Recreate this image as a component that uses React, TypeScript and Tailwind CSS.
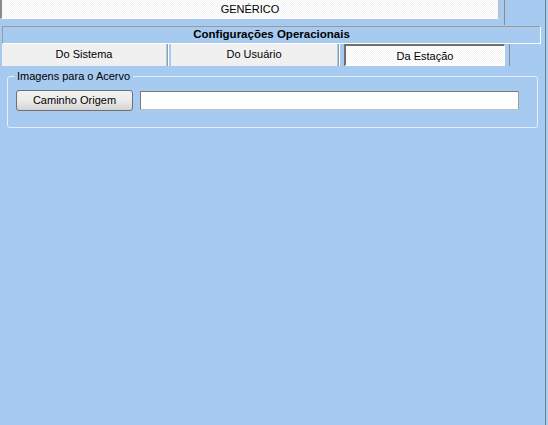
import React from 'react';

const checker =
  'bg-[repeating-conic-gradient(#f4f4f4_0%_25%,#ffffff_0%_50%)] bg-[length:2px_2px]';

const Tab: React.FC<{ label: string; active?: boolean; className?: string }> = ({ label, active, className }) =>
  active ? (
    <div
      className={`h-[22px] flex items-center justify-center border-t-2 border-l-2 border-t-[#6e6e6e] border-l-[#6e6e6e] border-r border-b border-r-white border-b-white ${checker} ${className ?? ''}`}
    >
      <span className="pt-[2px]">{label}</span>
    </div>
  ) : (
    <div className={`h-[22px] flex items-center justify-center bg-[#f0f0f0] ${className ?? ''}`}>
      <span className="-mt-[2px]">{label}</span>
    </div>
  );

export default function App() {
  return (
    <div
      className="w-[548px] h-[425px] bg-[#a6caf0] flex text-[11px] text-black overflow-hidden"
      style={{ fontFamily: '"Liberation Sans", "DejaVu Sans", sans-serif' }}
    >
      <div className="flex-1 flex flex-col">
        {/* top panel */}
        <div className="flex h-[26px]">
          <div
            className={`w-[499px] h-[19px] flex items-center justify-center border-l-2 border-l-[#8a8a8a] border-r border-r-[#bcbcbc] border-b border-b-white ${checker}`}
          >
            GENÉRICO
          </div>
          <div className="ml-[5px] w-px h-[25px] bg-[#8c8c8c]" />
        </div>

        {/* header */}
        <div className="ml-[2px] w-[539px] h-[18px] flex items-center justify-center border-t border-l border-t-[#9a9a9a] border-l-[#9a9a9a] border-r border-b border-r-white border-b-white font-bold text-[11.5px]">
          Configurações Operacionais
        </div>

        {/* tabs */}
        <div className="flex ml-[2px] h-[22px] items-start">
          <Tab label="Do Sistema" className="w-[164px]" />
          <div className="w-px h-[22px] ml-[1px] bg-[#9a9a9a]" />
          <div className="w-px h-[22px] bg-white" />
          <Tab label="Do Usuário" className="w-[166px] ml-[2px]" />
          <div className="w-px h-[22px] ml-[1px] bg-[#9a9a9a]" />
          <div className="w-px h-[22px] mr-[4px] bg-white" />
          <Tab label="Da Estação" active className="w-[161px]" />
          <div className="w-px h-[22px] ml-[4px] bg-[#8c8c8c]" />
        </div>

        {/* group box */}
        <div className="relative ml-[7px] mt-[10px] w-[531px] h-[52px] border border-[#e6f0fb] rounded-[3px]">
          <span className="absolute -top-[8px] left-[6px] px-[3px] bg-[#a6caf0] leading-[14px]">
            Imagens para o Acervo
          </span>
          <div className="flex items-center gap-[7px] mt-[13px] ml-[8px]">
            <button className="w-[117px] h-[21px] rounded-[3px] border border-[#707070] bg-gradient-to-b from-[#f2f2f2] via-[#ebebeb] to-[#d4d4d4] flex items-center justify-center">
              Caminho Origem
            </button>
            <div className="w-[379px] h-[19px] bg-white border border-[#7a7a7a] border-r-[#a0a0a0] border-b-[#c0c0c0]" />
          </div>
        </div>
      </div>
      <div className="w-px h-full bg-[#6f8093] mr-[2px]" />
    </div>
  );
}
